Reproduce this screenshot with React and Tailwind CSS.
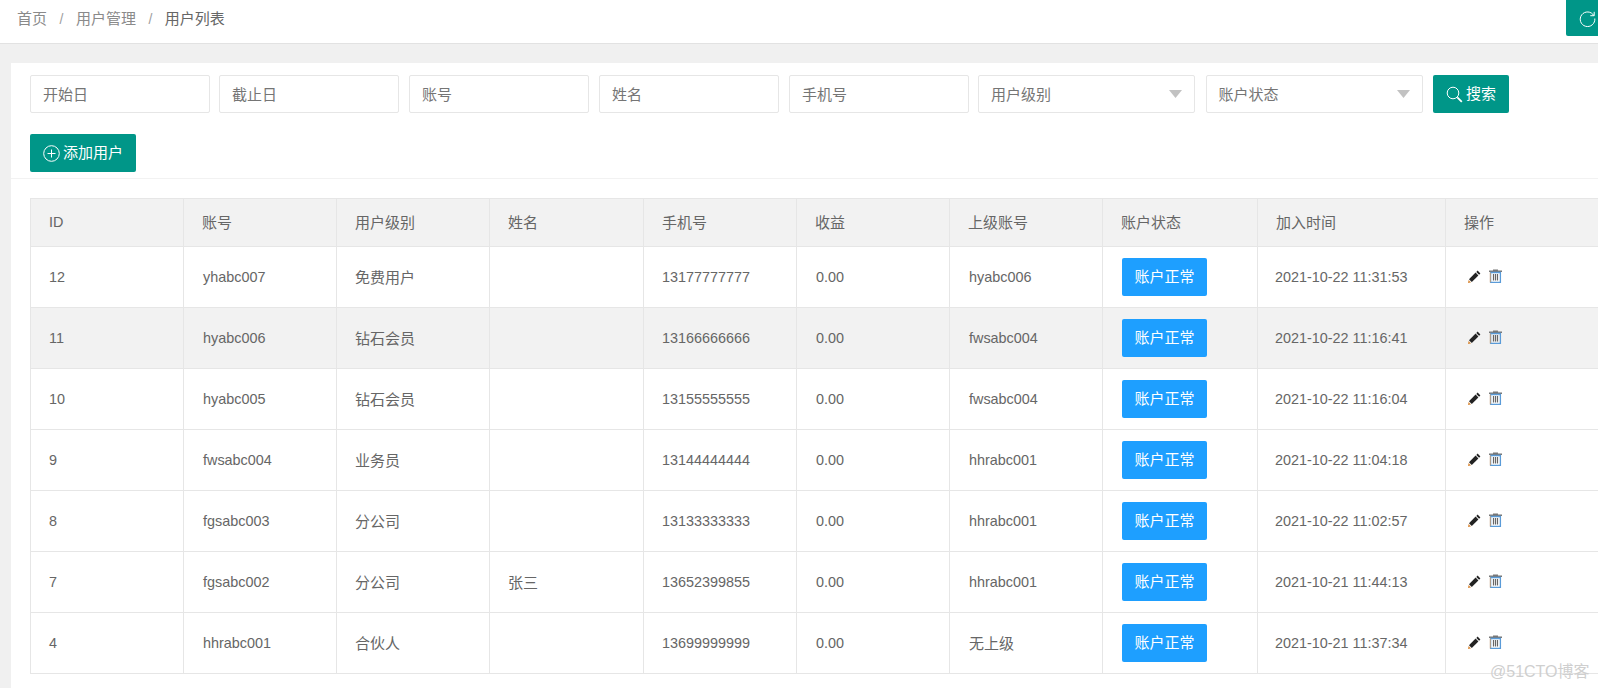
import React from "react";

const rows = [
  ["12", "yhabc007", "免费用户", "", "13177777777", "0.00", "hyabc006", "2021-10-22 11:31:53"],
  ["11", "hyabc006", "钻石会员", "", "13166666666", "0.00", "fwsabc004", "2021-10-22 11:16:41"],
  ["10", "hyabc005", "钻石会员", "", "13155555555", "0.00", "fwsabc004", "2021-10-22 11:16:04"],
  ["9", "fwsabc004", "业务员", "", "13144444444", "0.00", "hhrabc001", "2021-10-22 11:04:18"],
  ["8", "fgsabc003", "分公司", "", "13133333333", "0.00", "hhrabc001", "2021-10-22 11:02:57"],
  ["7", "fgsabc002", "分公司", "张三", "13652399855", "0.00", "hhrabc001", "2021-10-21 11:44:13"],
  ["4", "hhrabc001", "合伙人", "", "13699999999", "0.00", "无上级", "2021-10-21 11:37:34"],
];

const headers = ["ID", "账号", "用户级别", "姓名", "手机号", "收益", "上级账号", "账户状态", "加入时间", "操作"];

function Field({ label, gap = "mr-[10.3px]" }) {
  return (
    <div className={`w-[179.7px] h-[38px] border border-[#e6e6e6] rounded-[2px] pl-3 pt-[2px] flex items-center text-[15px] text-[#757575] ${gap}`}>
      {label}
    </div>
  );
}

function Select({ label }) {
  return (
    <div className="w-[217px] h-[38px] mr-[10.6px] border border-[#e6e6e6] rounded-[2px] pl-3 pr-3 pt-[2px] flex items-center justify-between text-[15px] text-[#757575]">
      <span>{label}</span>
      <svg width="13" height="8" viewBox="0 0 13 8" className="-translate-y-px">
        <path d="M0 0h13L6.5 8z" fill="#c2c2c2" />
      </svg>
    </div>
  );
}

function Pencil() {
  return (
    <svg width="13" height="13" viewBox="0 0 13 13">
      <path d="M9.600.600l2.800 2.800-1.300 1.300-2.800-2.800z" fill="#222" />
      <path d="M7.600 2.600l2.800 2.800-6.600 6.600-2.800-2.800z" fill="#222" />
      <path d="M.600 10l2.400 2.400-3 .600z" fill="#d98a3a" />
    </svg>
  );
}

function Trash() {
  return (
    <svg width="15" height="14" viewBox="0 0 15 14">
      <path d="M5 1.500V.400h5v1.100h4v1.500H1V1.500z" fill="#777" />
      <path d="M2.600 3.500h9.800v9.800H2.600z" fill="none" stroke="#5a9bd8" strokeWidth="1.300" />
      <path d="M2.300 3.500v9.800" stroke="#e0a060" strokeWidth=".8" />
      <path d="M5.500 5v6.500M7.500 5v6.500M9.500 5v6.500" stroke="#666" strokeWidth="1.200" />
    </svg>
  );
}

export default function App() {
  return (
    <div className="relative h-[688px] overflow-hidden bg-[#f0f0f0] flex flex-col font-['Liberation_Sans','Noto_Sans_CJK_SC',sans-serif] text-[#666]">
      <header className="h-[44px] shrink-0 bg-white border-b border-[#e2e2e2] flex items-start justify-between overflow-hidden">
        <div className="pl-[17px] h-[38px] flex items-center text-[15px] text-[#8a8a8a]">
          <span>首页</span>
          <span className="mx-[12.5px] text-[14px] text-[#a0a0a0]">/</span>
          <span>用户管理</span>
          <span className="mx-[12.5px] text-[14px] text-[#a0a0a0]">/</span>
          <span className="text-[#666]">用户列表</span>
        </div>
        <div className="w-[42px] h-[36px] mr-[-10px] bg-[#009688] rounded-bl-[2px] flex items-center justify-center">
          <svg width="17" height="17" viewBox="0 0 17 17" fill="none" stroke="white" strokeWidth="1">
            <path d="M14.800 5.500A7.300 7.300 0 1 0 15.800 8.500" />
            <path d="M15.200 1.800v3.900h-3.900" />
          </svg>
        </div>
      </header>

      <main className="flex-1 ml-[11px] mt-[19px] bg-white overflow-hidden">
        <div className="h-[116px] pl-[19px] pt-[12px] border-b border-[#f2f2f2]">
          <div className="flex">
            <Field label="开始日" gap="mr-[9.3px]" />
            <Field label="截止日" />
            <Field label="账号" />
            <Field label="姓名" />
            <Field label="手机号" gap="mr-[9.3px]" />
            <Select label="用户级别" />
            <Select label="账户状态" />
            <button className="w-[76px] h-[38px] pt-px bg-[#009688] rounded-[2px] text-white text-[15px] flex items-center justify-center gap-[3px]">
              <svg width="17" height="17" viewBox="0 0 17 17" fill="none" stroke="white">
                <circle cx="7" cy="7" r="5.800" strokeWidth="1" />
                <path d="M11.300 11.300l4.500 4.500" strokeWidth="1.800" />
              </svg>
              搜索
            </button>
          </div>
          <button className="mt-[21px] w-[106px] h-[38px] pt-px bg-[#009688] rounded-[2px] text-white text-[15px] flex items-center justify-center gap-[3px]">
            <svg width="17" height="17" viewBox="0 0 17 17" fill="none" stroke="white" strokeWidth="1">
              <circle cx="8.500" cy="8.500" r="7.800" />
              <path d="M8.500 4.500v8M4.500 8.500h8" />
            </svg>
            添加用户
          </button>
        </div>

        <div className="pl-[19px] pt-[19px]">
          <table className="w-[1620px] table-fixed border-collapse text-[14.4px]">
            <colgroup>
              <col className="w-[153px]" />
              <col className="w-[153px]" />
              <col className="w-[153px]" />
              <col className="w-[154px]" />
              <col className="w-[153px]" />
              <col className="w-[153px]" />
              <col className="w-[153px]" />
              <col className="w-[155px]" />
              <col className="w-[188px]" />
              <col />
            </colgroup>
            <thead>
              <tr className="h-[48px] bg-[#f2f2f2]">
                {headers.map((h) => (
                  <th key={h} className={`border border-[#e6e6e6] px-[18px] pt-px text-left font-normal ${h === "ID" ? "text-[14.4px]" : "text-[15px]"}`}>
                    {h}
                  </th>
                ))}
              </tr>
            </thead>
            <tbody>
              {rows.map((r) => (
                <tr key={r[0]} className={`h-[61px] ${r[0] === "11" ? "bg-[#f2f2f2]" : ""}`}>
                  <td className="border border-[#e6e6e6] px-[18px] pt-[2px]">{r[0]}</td>
                  <td className="border border-[#e6e6e6] px-[19px] pt-[2px]">{r[1]}</td>
                  <td className="border border-[#e6e6e6] px-[18px] pt-[2px] text-[15px]">{r[2]}</td>
                  <td className="border border-[#e6e6e6] px-[18px] pt-[2px] text-[15px]">{r[3]}</td>
                  <td className="border border-[#e6e6e6] px-[18px] pt-[2px]">{r[4]}</td>
                  <td className="border border-[#e6e6e6] px-[19px] pt-[2px]">{r[5]}</td>
                  <td className={`border border-[#e6e6e6] px-[19px] pt-[2px] ${r[6] === "无上级" ? "text-[15px]" : ""}`}>{r[6]}</td>
                  <td className="border border-[#e6e6e6] pl-[19px]">
                    <button className="w-[85px] h-[38px] pt-px bg-[#1e9fff] rounded-[2px] text-white text-[15px]">账户正常</button>
                  </td>
                  <td className="border border-[#e6e6e6] pl-[17px] pr-0 pt-[2px]">{r[7]}</td>
                  <td className="border border-[#e6e6e6] pl-[22px]">
                    <div className="flex items-center gap-[7px] -translate-y-px">
                      <Pencil />
                      <Trash />
                    </div>
                  </td>
                </tr>
              ))}
            </tbody>
          </table>
        </div>
      </main>

      <div className="absolute left-[1490px] top-[660px] text-[16px] text-[#cfcfcf] leading-[24px] whitespace-nowrap">@51CTO博客</div>
    </div>
  );
}
